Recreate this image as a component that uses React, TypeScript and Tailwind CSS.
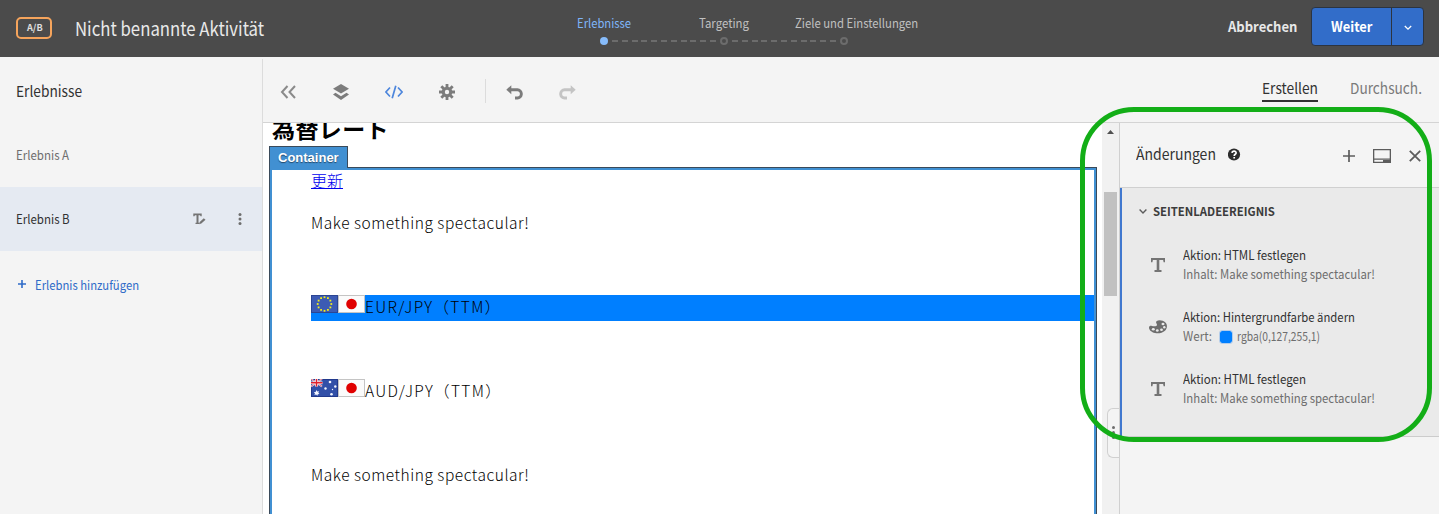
import type { ReactNode } from "react";

function Text({ className = "", children }: { className?: string; children: ReactNode }) {
  return <span className={`inline-block origin-left whitespace-nowrap ${className}`}>{children}</span>;
}

function StepDot({ active = false }: { active?: boolean }) {
  return active ? (
    <span className="size-2 shrink-0 rounded-full bg-[#87bcfb]" />
  ) : (
    <span className="size-2 shrink-0 rounded-full border-2 border-[#6c6c6c]" />
  );
}

function StepLine() {
  return (
    <span className="mx-1 h-0.5 w-[104px] shrink-0 bg-[repeating-linear-gradient(90deg,#6c6c6c_0px,#6c6c6c_6px,transparent_6px,transparent_9.8px)]" />
  );
}

function Header() {
  return (
    <header className="flex h-[57px] shrink-0 bg-[#4b4b4b]">
      <div className="flex w-[544px] shrink-0 pl-4">
        <div className="mt-[17px] flex h-[22px] w-9 justify-center rounded-[5px] border-2 border-[#f5a45c] pl-[2px] text-[9.5px] leading-[17px] font-bold text-[#e0e0e0]">
          <Text className="origin-center scale-x-[0.96]">A/B</Text>
        </div>
        <h1 className="ml-[23px] text-[19px] leading-[55px] text-[#e9e9e9]">
          <Text className="scale-x-[0.882]">Nicht benannte Aktivität</Text>
        </h1>
      </div>
      <nav className="flex w-[400px] shrink-0 flex-col pt-[13px]">
        <div className="flex text-[12.5px] leading-5 text-[#c0c0c0]">
          <span className="w-[87px] pl-[33px] text-[#7fb5f8]">
            <Text className="scale-x-[0.9]">Erlebnisse</Text>
          </span>
          <span className="w-[164px] pl-[68px]">
            <Text className="scale-x-[0.914]">Targeting</Text>
          </span>
          <Text className="scale-x-[0.905]">Ziele und Einstellungen</Text>
        </div>
        <div className="mt-1 flex items-center pl-14">
          <StepDot active />
          <StepLine />
          <StepDot />
          <StepLine />
          <StepDot />
        </div>
      </nav>
      <div className="ml-auto flex shrink-0 pr-[15px] text-[14px] font-bold">
        <div className="w-[83px] leading-[53px] text-[#e8e8e8]">
          <Text className="scale-x-[0.93]">Abbrechen</Text>
        </div>
        <div className="mt-[7px] flex h-[39px] w-[113px] rounded-[4px] border border-[#2c3440] bg-[#326dc9] text-white">
          <div className="w-[80px] border-r border-[#2c3440] pl-[19px] leading-[37px]">
            <Text className="scale-x-[0.92]">Weiter</Text>
          </div>
          <svg className="mt-[17px] ml-3" width="8" height="6" viewBox="0 0 8 6" fill="none" stroke="white" strokeWidth="1.3">
            <path d="M.8 1 4 4.2 7.2 1" />
          </svg>
        </div>
      </div>
    </header>
  );
}

function Sidebar() {
  return (
    <aside className="w-[262px] shrink-0 text-[12.5px]">
      <div className="h-[66px] pl-4 text-[15px] leading-[67px] text-[#323232]">
        <Text className="scale-x-[0.915]">Erlebnisse</Text>
      </div>
      <div className="h-16 pl-4 leading-[63px] text-[#6e6e6e]">
        <Text className="scale-x-[0.92]">Erlebnis A</Text>
      </div>
      <div className="flex h-16 items-center bg-[#e5eaf2] pl-4 text-[#323232]">
        <span className="w-[177px] leading-[62px]">
          <Text className="scale-x-[0.92]">Erlebnis B</Text>
        </span>
        <svg width="13" height="12" viewBox="0 0 13 12" fill="#747474">
          <path d="M.3.5h8.4V3.200H7.500l-.4-1H5.500v7.500h1V11H2.500V9.700h1V2.200H1.900l-.4 1H.3z" />
          <path d="m6.700 9 4.100-3.800 1.700 1.500L8.300 10.600l-2.100.6z" />
        </svg>
        <svg className="ml-[32px]" width="4" height="14" viewBox="0 0 4 14" fill="#6e6e6e">
          <circle cx="2" cy="2.500" r="1.500" />
          <circle cx="2" cy="7" r="1.500" />
          <circle cx="2" cy="11.500" r="1.500" />
        </svg>
      </div>
      <div className="flex pl-[18px] text-[#2f6bc8]">
        <svg className="mt-[29px] mr-[9px]" width="8" height="8" viewBox="0 0 8 8" stroke="#2f6bc8" strokeWidth="1.6">
          <path d="M4 0v8M0 4h8" />
        </svg>
        <span className="leading-[68px]">
          <Text className="scale-x-[0.903]">Erlebnis hinzufügen</Text>
        </span>
      </div>
    </aside>
  );
}

function Toolbar() {
  return (
    <div className="flex h-[66px] shrink-0 items-start border-b border-[#d4d4d4] pr-4">
      <svg className="mt-[28px] ml-[17px]" width="18" height="14" viewBox="0 0 18 14" fill="none" stroke="#8a8a8a" strokeWidth="2">
        <path d="M7.500 1 2 7l5.500 6M15 1 9.500 7l5.500 6" />
      </svg>
      <svg className="mt-[27px] ml-[35px]" width="16" height="16" viewBox="0 0 16 16" fill="#7c7c7c">
        <path d="M8 0 0 4.800l8 4.800 8-4.800z" />
        <path d="M2.500 8.700 0 10.600 8 16l8-5.400-2.500-1.900L8 12.200z" />
      </svg>
      <svg className="mt-[28px] ml-9" width="18" height="14" viewBox="0 0 18 14" fill="none" stroke="#4d86dc" strokeWidth="1.700">
        <path d="M5 2.500.9 7 5 11.500M13 2.500 17.100 7 13 11.500M10.800.700 7.200 13.300" />
      </svg>
      <svg className="mt-[27px] ml-9" width="16" height="16" viewBox="0 0 16 16">
        <g stroke="#7c7c7c" strokeWidth="2.800">
          <path d="M8 0v16M0 8h16M2.300 2.300l11.400 11.400M13.700 2.300 2.300 13.700" />
        </g>
        <circle cx="8" cy="8" r="5.300" fill="#7c7c7c" />
        <circle cx="8" cy="8" r="2.200" fill="#f4f4f4" />
      </svg>
      <span className="mt-[22px] ml-[30px] h-6 w-px bg-[#dcdcdc]" />
      <svg className="mt-[28px] ml-5" width="17" height="16" viewBox="0 0 17 16">
        <path d="M.3 4.700 5.300.200v9z" fill="#7c7c7c" />
        <path d="M4.500 4.800h7a3.800 3.800 0 0 1 3.800 3.800v.9a3.800 3.800 0 0 1-3.800 3.500H9" fill="none" stroke="#7c7c7c" strokeWidth="2.900" />
      </svg>
      <svg className="mt-[28px] ml-9" width="17" height="16" viewBox="0 0 17 16">
        <path d="M16.700 4.700 11.700.200v9z" fill="#c4c4c4" />
        <path d="M12.500 4.800h-7a3.800 3.800 0 0 0-3.800 3.800v.9A3.800 3.800 0 0 0 5.500 13H8" fill="none" stroke="#c4c4c4" strokeWidth="2.900" />
      </svg>
      <div className="ml-auto flex text-[15px]">
        <div className="mt-[20px] h-[25px] w-14 border-b-2 border-[#323232] leading-[22px] text-[#323232]">
          <Text className="scale-x-[0.918]">Erstellen</Text>
        </div>
        <div className="mt-[20px] ml-8 w-[73px] leading-[22px] text-[#7a7a7a]">
          <Text className="scale-x-[0.912]">Durchsuch.</Text>
        </div>
      </div>
    </div>
  );
}

function FlagEU() {
  const stars = Array.from({ length: 12 }, (_, i) => (i * Math.PI) / 6);
  return (
    <svg width="27" height="18" viewBox="0 0 27 18" className="shrink-0">
      <path d="M0 0h27v18H0z" fill="#2b4593" />
      <path d="M1 1h25v16H1z" fill="#3c5bb4" />
      {stars.map((a) => (
        <rect key={a} x={13.5 + 6.8 * Math.sin(a) - 0.9} y={9 - 6.8 * Math.cos(a) - 0.9} width="1.8" height="1.8" fill="#f2ee1c" />
      ))}
    </svg>
  );
}

function FlagJP() {
  return (
    <svg width="27" height="18" viewBox="0 0 27 18" className="shrink-0">
      <path d="M0 0h27v18H0z" fill="#c4c4c4" />
      <path d="M1 1h25v16H1z" fill="#fbfbfb" />
      <circle cx="13.500" cy="9" r="5.300" fill="#e00000" />
    </svg>
  );
}

function FlagAU() {
  return (
    <svg width="27" height="18" viewBox="0 0 27 18" className="shrink-0">
      <path d="M0 0h27v18H0z" fill="#21398c" />
      <path d="M1 1h25v16H1z" fill="#3250a8" />
      <path d="M0 0l11 7.500M11 0 0 7.500" stroke="#e8dfee" strokeWidth="1.700" />
      <path d="M0 0l11 7.500M11 0 0 7.500" stroke="#d94a5c" strokeWidth=".7" />
      <path d="M5.500 0v7.500M0 3.800h11.500" stroke="#fff" strokeWidth="2.800" />
      <path d="M5.500 0v7.500M0 3.800h11.500" stroke="#e0202c" strokeWidth="1.500" />
      <g fill="#f4f6ff">
        <path d="m5.500 11 .8 1.600 1.800-.4-.8 1.500 1.200 1.300-1.700.2-.4 1.500-1.300-1.200-1.700.5.6-1.600-1.200-1.200 1.800-.3z" />
        <circle cx="19" cy="3" r="1.300" />
        <circle cx="14.500" cy="9.500" r="1.200" />
        <circle cx="24.300" cy="7.500" r="1.200" />
        <circle cx="20.500" cy="15.300" r="1.300" />
        <circle cx="21.500" cy="10.500" r=".7" />
      </g>
    </svg>
  );
}

function Canvas() {
  return (
    <main className="h-[391px] w-[839px] shrink-0 overflow-hidden bg-white pl-1.5 text-black">
      <h2 className="h-[23px] pl-[3px] text-[23px] leading-[10px] font-bold tracking-[0.4px]">為替レート</h2>
      <div className="relative z-10 h-[22px] w-[79px] border border-b-0 border-[#3a4a5a] bg-[#4190d2] pl-2 font-[Liberation_Sans,sans-serif] text-[13px] leading-[21px] font-bold text-white [text-shadow:0_1px_1px_#24486a]">
        Container
      </div>
      <div className="-mt-px h-[360px] w-[828px] border border-[#3a4a5a]">
        <div className="h-[358px] border-2 border-[#4190d2] pl-[39px] text-[15.5px] font-light tracking-[0.54px]">
          <div className="h-[42px] text-[16px] leading-[21px] tracking-normal text-[#0000ee]">
            <a className="underline decoration-1 underline-offset-[1px]">更新</a>
          </div>
          <p className="h-[83px] leading-[21px]">Make something spectacular!</p>
          <div className="flex h-[26px] items-start bg-[#007fff] leading-[23px]">
            <FlagEU />
            <FlagJP />
            <span className="tracking-[1.35px]">EUR/JPY（TTM）</span>
          </div>
          <div className="mt-[58px] flex h-[85px] items-start leading-[23px]">
            <FlagAU />
            <FlagJP />
            <span className="tracking-[1.35px]">AUD/JPY（TTM）</span>
          </div>
          <p className="leading-[20px]">Make something spectacular!</p>
        </div>
      </div>
    </main>
  );
}

function Scrollbar() {
  return (
    <div className="flex w-[17px] shrink-0 flex-col items-center bg-[#f1f1f1]">
      <svg className="mt-[7px]" width="7" height="4" viewBox="0 0 7 4" fill="#505050">
        <path d="M3.500 0 7 4H0z" />
      </svg>
      <div className="mt-[58px] h-[104px] w-[13px] bg-[#c1c1c1]" />
      <div className="mt-28 flex h-[50px] w-3 flex-col items-center justify-center gap-[2px] self-end rounded-l-[6px] border border-r-0 border-[#d0d0d0] bg-[#f4f4f4] pb-0.5">
        <span className="size-[3px] rounded-full bg-[#6e6e6e]" />
        <span className="size-[3px] rounded-full bg-[#6e6e6e]" />
        <span className="size-[3px] rounded-full bg-[#6e6e6e]" />
      </div>
    </div>
  );
}

function TextIcon() {
  return (
    <svg className="mt-[13px] ml-[29px]" width="14" height="14" viewBox="0 0 14 14" fill="#747474">
      <path d="M0 0h14v4.200h-1.400l-.5-2.200H8.300v10h2.200v2h-7v-2h2.200V2H1.900l-.5 2.200H0z" />
    </svg>
  );
}

function PaletteIcon() {
  return (
    <svg className="mt-[13px] ml-[27px]" width="18" height="14" viewBox="0 0 18 14">
      <path d="M7.500 1.300C9.500-.3 14 .2 16.400 2.500c2.200 2.200 2 5.900-.4 8.200-2.400 2.200-6.500 3-10 2.300C2.500 12.300 0 10 0 7.500 0 6 1.300 5.600 3 5.900c2 .4 5 .4 5-1C8 3.800 6.300 2.700 7.500 1.300z" fill="#6e6e6e" />
      <g fill="#eaeaea">
        <ellipse cx="14" cy="4" rx="1.500" ry="1.200" />
        <circle cx="15.300" cy="7.300" r="1.200" />
        <ellipse cx="12.500" cy="9.800" rx="1.400" ry="1.300" />
        <ellipse cx="8.300" cy="10.500" rx="1.400" ry="1.300" />
        <ellipse cx="4.300" cy="9.200" rx="1.500" ry="1.200" />
      </g>
    </svg>
  );
}

function Change({ icon, title, children }: { icon: ReactNode; title: ReactNode; children: ReactNode }) {
  return (
    <li className="flex h-[62px] text-[12.5px] leading-[19px]">
      <div className="w-[61px] shrink-0">{icon}</div>
      <div>
        <div className="h-[19px] text-[#323232]">{title}</div>
        <div className="flex h-[19px] text-[#6e6e6e]">{children}</div>
      </div>
    </li>
  );
}

function ChangesPanel() {
  return (
    <section className="min-w-0 flex-1 border-l border-[#d0d0d0]">
      <div className="flex h-[65px] items-start border-b border-[#d0d0d0] pl-4">
        <div className="w-[92px] text-[15px] leading-[62px] text-[#323232]">
          <Text className="scale-x-[0.933]">Änderungen</Text>
        </div>
        <svg className="mt-[25px]" width="13" height="13" viewBox="0 0 13 13">
          <circle cx="6" cy="6.500" r="6.100" fill="#2c2c2c" />
          <path d="M4 4.900C4.200 2.500 8.200 2.500 8.100 4.900c0 1.400-1.900 1.400-1.900 3M6.200 9v1.600" fill="none" stroke="#fff" strokeWidth="1.700" />
        </svg>
        <svg className="mt-[27px] ml-[102px]" width="12" height="12" viewBox="0 0 12 12" stroke="#5c5c5c" strokeWidth="1.700">
          <path d="M6 0v12M0 6h12" />
        </svg>
        <svg className="mt-[26px] ml-[18px]" width="18" height="14" viewBox="0 0 18 14">
          <path d="M.6.600h16.800v12.800H.6z" fill="none" stroke="#5c5c5c" strokeWidth="1.400" />
          <path d="M1 9.500h16v1.300H1zM10 11h7v2.200h-7z" fill="#5c5c5c" />
        </svg>
        <svg className="mt-[27px] ml-[18px]" width="12" height="12" viewBox="0 0 12 12" stroke="#5c5c5c" strokeWidth="1.800">
          <path d="m.8.800 10.400 10.400M11.200.800.800 11.200" />
        </svg>
      </div>
      <div className="h-[249px] border-b border-l-2 border-b-[#cccccc] border-l-[#4178cf] bg-[#eaeaea]">
        <div className="flex h-[57px] items-start pl-[17px] text-[12px] font-bold text-[#3c3c3c]">
          <svg className="mt-[21px] mr-[6px]" width="8" height="5" viewBox="0 0 8 5" fill="none" stroke="#5c5c5c" strokeWidth="1.400">
            <path d="M.6.600 4 4 7.400.600" />
          </svg>
          <span className="leading-[45px]">
            <Text className="scale-x-[0.944]">SEITENLADEEREIGNIS</Text>
          </span>
        </div>
        <ul>
          <Change icon={<TextIcon />} title={<Text className="scale-x-[0.924]">Aktion: HTML festlegen</Text>}>
            <Text className="scale-x-[0.91]">Inhalt: Make something spectacular!</Text>
          </Change>
          <Change icon={<PaletteIcon />} title={<Text className="scale-x-[0.905]">Aktion: Hintergrundfarbe ändern</Text>}>
            <span className="w-[36px]">
              <Text className="scale-x-[0.93]">Wert:</Text>
            </span>
            <span className="mt-[4px] mr-[4px] size-[14px] rounded-[3px] border border-[#b4cdea] bg-[#007fff] bg-clip-padding" />
            <Text className="scale-x-[0.824]">rgba(0,127,255,1)</Text>
          </Change>
          <Change icon={<TextIcon />} title={<Text className="scale-x-[0.924]">Aktion: HTML festlegen</Text>}>
            <Text className="scale-x-[0.91]">Inhalt: Make something spectacular!</Text>
          </Change>
        </ul>
      </div>
    </section>
  );
}

export default function App() {
  return (
    <div className="relative flex h-[514px] w-[1439px] flex-col overflow-hidden bg-[#f4f4f4] font-['Noto_Sans_CJK_JP','Noto_Sans',sans-serif]">
      <Header />
      <div className="flex min-h-0 flex-1">
        <Sidebar />
        <div className="mt-0.5 w-px shrink-0 bg-[#dcdcdc]" />
        <div className="flex min-w-0 flex-1 flex-col">
          <Toolbar />
          <div className="flex min-h-0 flex-1">
            <Canvas />
            <Scrollbar />
            <ChangesPanel />
          </div>
        </div>
      </div>
      <div className="pointer-events-none absolute top-[107px] left-[1080px] z-20 h-[335px] w-[352px] rounded-[54px] border-[5px] border-[#13ae17]" />
    </div>
  );
}
